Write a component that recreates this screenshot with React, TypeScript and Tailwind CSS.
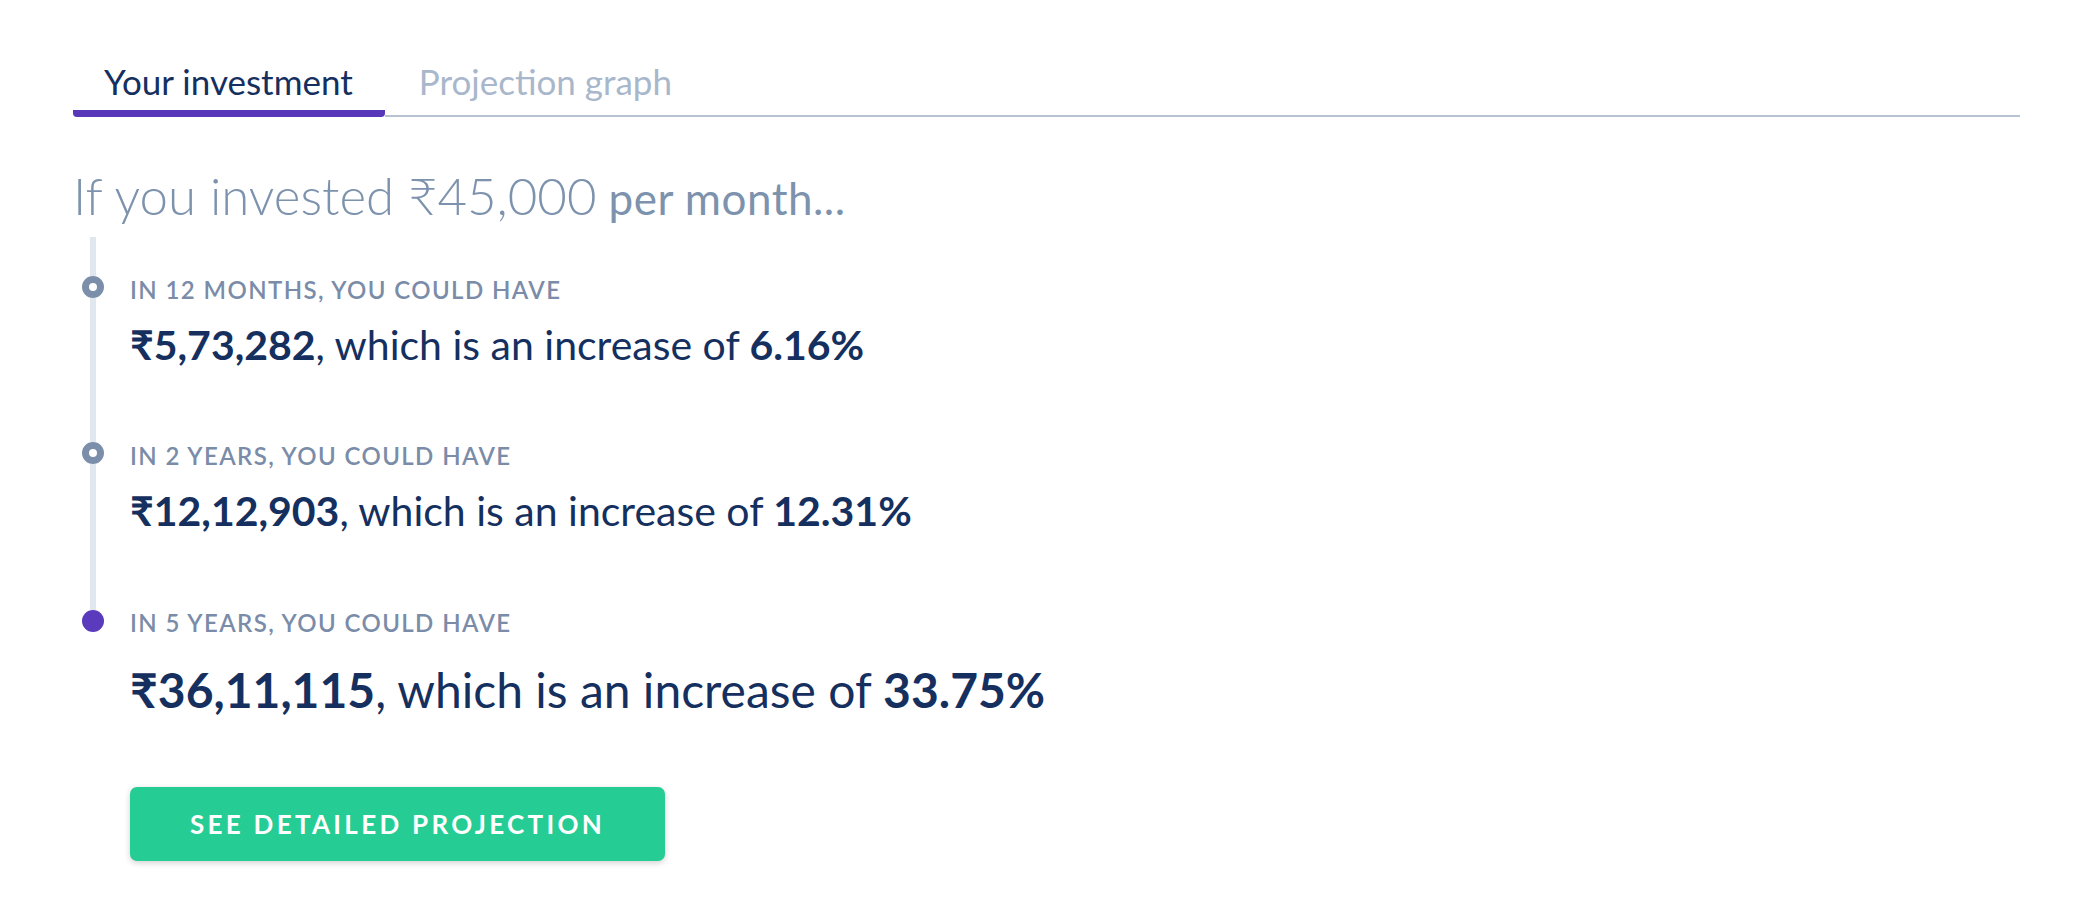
import React from "react";

type Item = {
  label: string;
  amount: string;
  pct: string;
  last?: boolean;
};

const items: Item[] = [
  { label: "IN 12 MONTHS, YOU COULD HAVE", amount: "₹5,73,282", pct: "6.16%" },
  { label: "IN 2 YEARS, YOU COULD HAVE", amount: "₹12,12,903", pct: "12.31%" },
  { label: "IN 5 YEARS, YOU COULD HAVE", amount: "₹36,11,115", pct: "33.75%", last: true },
];

const TimelineRow = ({ item }: { item: Item }) => {
  if (item.last) {
    return (
      <div className="flex">
        {/* marker */}
        <div className="flex w-[40px] flex-col items-center">
          <div className="h-[41px] w-[6px] bg-[#e1e7ef]" />
          <div className="h-[22px] w-[22px] rounded-full bg-[#5a3abd]" />
        </div>
        <div className="pl-[17px] pt-[39px]">
          <div className="text-[24px] leading-[30px] font-semibold tracking-[1.4px] text-[#7a8ca8]">
            {item.label}
          </div>
          <div className="mt-[23px] text-[48px] leading-[58px] text-[#15305f]">
            <span className="font-bold">{item.amount}</span>, which is an increase of{" "}
            <span className="font-bold">{item.pct}</span>
          </div>
        </div>
      </div>
    );
  }
  return (
    <div className="flex">
      <div className="flex w-[40px] flex-col items-center">
        <div className="h-[39px] w-[6px] bg-[#e1e7ef]" />
        <div className="h-[22px] w-[22px] rounded-full border-[7px] border-[#7b8fab] bg-white" />
        <div className="w-[6px] flex-1 bg-[#e1e7ef]" />
      </div>
      <div className="pl-[17px] pt-[38px] pb-[33px]">
        <div className="text-[24px] leading-[30px] font-semibold tracking-[1.4px] text-[#7a8ca8]">
          {item.label}
        </div>
        <div className="mt-[15px] text-[41px] leading-[50px] text-[#15305f]">
          <span className="font-bold">{item.amount}</span>, which is an increase of{" "}
          <span className="font-bold">{item.pct}</span>
        </div>
      </div>
    </div>
  );
};

export default function App() {
  return (
    <div
      className="min-h-screen bg-white pl-[73px] pr-[64px] pt-[52px]"
      style={{ fontFamily: "Lato, 'Noto Sans', 'DejaVu Sans', sans-serif" }}
    >
      {/* tabs */}
      <div className="flex items-end">
        <button className="rounded-b-[4px] border-b-[7px] border-[#5837b8] pl-[31px] pr-[32px] pt-[9px] pb-[9px] text-[35px] leading-[40px] text-[#15305f]">
          Your investment
        </button>
        <button className="border-b-2 border-[#b7c3d1] pl-[34px] pr-[32px] pt-[9px] pb-[14px] text-[35px] leading-[40px] text-[#a8b7cb]">
          Projection graph
        </button>
        <div className="flex-1 border-b-2 border-[#b7c3d1]" />
      </div>

      {/* headline */}
      <div className="mt-[49px] flex items-baseline text-[#7d92ad]">
        <span className="text-[51px] leading-[60px] font-light">If you invested ₹45,000</span>
        <span className="ml-[12px] text-[44px] leading-[40px] tracking-[0.5px]">per month...</span>
      </div>

      {/* timeline */}
      <div className="mt-[11px]">
        {items.map((it) => (
          <TimelineRow key={it.label} item={it} />
        ))}
      </div>

      <div className="mt-[68px] pl-[57px]">
        <button className="flex h-[74px] w-[535px] items-center justify-center rounded-[7px] bg-[#25cd94] text-[26px] font-bold tracking-[3.3px] text-white shadow-[0_2px_6px_rgba(0,0,0,0.18)]">
          SEE DETAILED PROJECTION
        </button>
      </div>
    </div>
  );
}
